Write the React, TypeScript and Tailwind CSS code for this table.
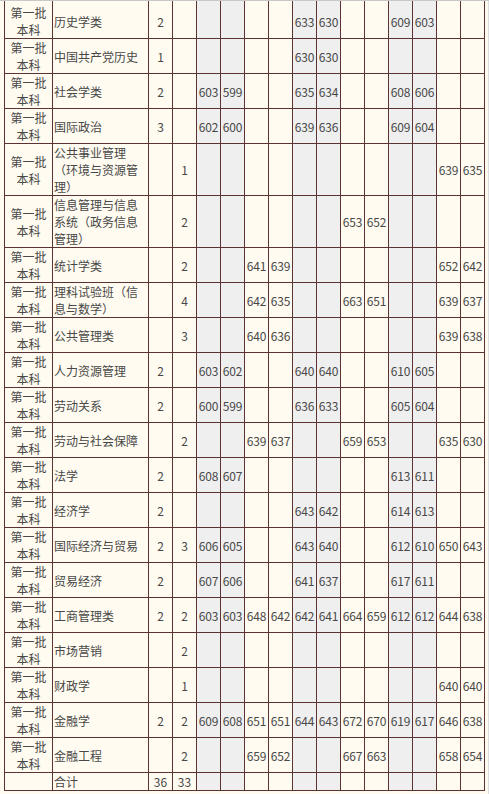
import React from "react";

type Row = [string, string, string, (string | null)[]];

const E = null;
const rows: Row[] = [
  ["历史学类", "2", "", [E, E, E, E, "633", "630", E, E, "609", "603", E, E]],
  ["中国共产党历史", "1", "", [E, E, E, E, "630", "630", E, E, E, E, E, E]],
  ["社会学类", "2", "", ["603", "599", E, E, "635", "634", E, E, "608", "606", E, E]],
  ["国际政治", "3", "", ["602", "600", E, E, "639", "636", E, E, "609", "604", E, E]],
  ["公共事业管理（环境与资源管理）", "", "1", [E, E, E, E, E, E, E, E, E, E, "639", "635"]],
  ["信息管理与信息系统（政务信息管理）", "", "2", [E, E, E, E, E, E, "653", "652", E, E, E, E]],
  ["统计学类", "", "2", [E, E, "641", "639", E, E, E, E, E, E, "652", "642"]],
  ["理科试验班（信息与数学）", "", "4", [E, E, "642", "635", E, E, "663", "651", E, E, "639", "637"]],
  ["公共管理类", "", "3", [E, E, "640", "636", E, E, E, E, E, E, "639", "638"]],
  ["人力资源管理", "2", "", ["603", "602", E, E, "640", "640", E, E, "610", "605", E, E]],
  ["劳动关系", "2", "", ["600", "599", E, E, "636", "633", E, E, "605", "604", E, E]],
  ["劳动与社会保障", "", "2", [E, E, "639", "637", E, E, "659", "653", E, E, "635", "630"]],
  ["法学", "2", "", ["608", "607", E, E, E, E, E, E, "613", "611", E, E]],
  ["经济学", "2", "", [E, E, E, E, "643", "642", E, E, "614", "613", E, E]],
  ["国际经济与贸易", "2", "3", ["606", "605", E, E, "643", "640", E, E, "612", "610", "650", "643"]],
  ["贸易经济", "2", "", ["607", "606", E, E, "641", "637", E, E, "617", "611", E, E]],
  ["工商管理类", "2", "2", ["603", "603", "648", "642", "642", "641", "664", "659", "612", "612", "644", "638"]],
  ["市场营销", "", "2", [E, E, E, E, E, E, E, E, E, E, E, E]],
  ["财政学", "", "1", [E, E, E, E, E, E, E, E, E, E, "640", "640"]],
  ["金融学", "2", "2", ["609", "608", "651", "651", "644", "643", "672", "670", "619", "617", "646", "638"]],
  ["金融工程", "", "2", [E, E, "659", "652", E, E, "667", "663", E, E, "658", "654"]],
];

const greyCols = new Set([0, 1, 4, 5, 8, 9]);

export default function App() {
  const cells: React.ReactNode[] = [];
  rows.forEach((r, i) => {
    const first = i === 0;
    const pt = first ? "pt-[3px]" : "";
    cells.push(
      <div key={`b${i}`} className={`bg-[#fffbf0] flex items-center justify-center text-center ${pt}`}>
        <span>第一批本科</span>
      </div>
    );
    cells.push(
      <div key={`n${i}`} className={`bg-[#fffbf0] flex items-center pl-px ${pt}`}>
        <span>{r[0]}</span>
      </div>
    );
    cells.push(
      <div key={`c1${i}`} className={`bg-[#fffbf0] flex items-center justify-center ${pt}`}>
        {r[1]}
      </div>
    );
    cells.push(
      <div key={`c2${i}`} className={`bg-[#fffbf0] flex items-center justify-center ${pt}`}>
        {r[2]}
      </div>
    );
    r[3].forEach((s, j) => {
      cells.push(
        <div
          key={`s${i}-${j}`}
          className={`${greyCols.has(j) ? "bg-[#efefef]" : "bg-[#fffbf0]"} flex items-center justify-center tracking-[-0.2px] ${pt}`}
        >
          {s ?? ""}
        </div>
      );
    });
  });
  // total row
  cells.push(<div key="tb" className="bg-[#fffbf0]" />);
  cells.push(
    <div key="tn" className="bg-[#fffbf0] flex items-center pl-px">
      合计
    </div>
  );
  cells.push(
    <div key="t1" className="bg-[#fffbf0] flex items-center justify-center">
      36
    </div>
  );
  cells.push(
    <div key="t2" className="bg-[#fffbf0] flex items-center justify-center">
      33
    </div>
  );
  for (let j = 0; j < 12; j++) {
    cells.push(
      <div key={`ts${j}`} className={greyCols.has(j) ? "bg-[#efefef]" : "bg-[#fffbf0]"} />
    );
  }

  return (
    <div className="w-[489px] h-[794px] overflow-hidden bg-[#fffbf0] border-t border-[#c8c8c8] font-['Noto_Sans_CJK_SC',sans-serif] text-[12px] leading-[17px] text-[#484848]">
      <div className="flex border-r border-[#dcdcdc] h-full">
        <div className="ml-[4px] self-start grid grid-cols-[47px_95px_23px_23px_repeat(12,23px)] gap-px bg-[#5c3333] px-px pb-px">
          {cells}
        </div>
      </div>
    </div>
  );
}
